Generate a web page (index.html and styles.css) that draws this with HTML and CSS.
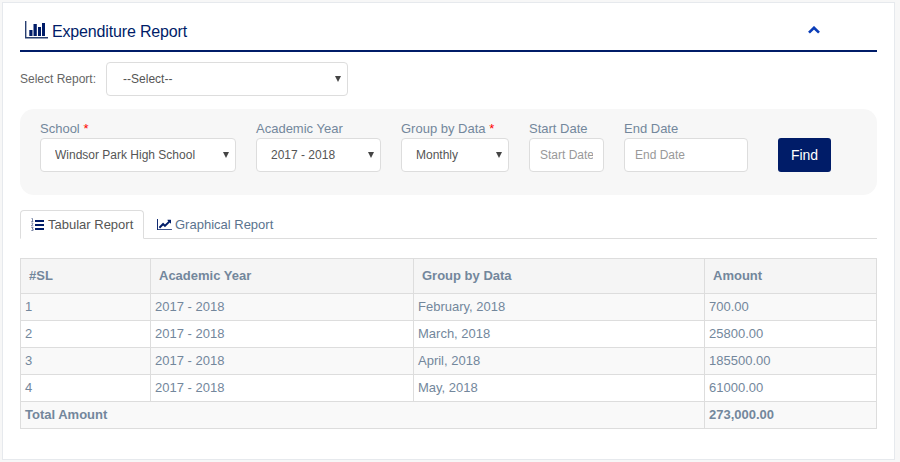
FILE: index.html
```html
<!DOCTYPE html>
<html lang="en">
<head>
<meta charset="utf-8">
<title>Expenditure Report</title>
<link rel="stylesheet" href="styles.css">
</head>
<body>
<main class="panel">
  <header class="panel-head">
    <svg class="title-icon" viewBox="0 0 23 18"><path fill="#283f70" d="M0 0h1.4v16H23v1.6H0z"/><path fill="#001c68" d="M4.3 9h3.2v6H4.3zM8.5 3h3.3v12H8.500zM13 6h3v9h-3zM17 2h3v13h-3z"/></svg>
    <h1>Expenditure Report</h1>
    <svg class="chevron" viewBox="0 0 12 8"><path d="M1 6.600 6 1.800l5 4.800" fill="none" stroke="#0a3db8" stroke-width="2.700"/></svg>
  </header>
  <div class="select-row">
    <label for="report">Select Report:</label>
    <div class="select w-report"><select id="report"><option>--Select--</option></select></div>
  </div>
  <form class="filters">
    <div class="field f-school"><label for="school">School <span class="req">*</span></label><div class="select"><select id="school"><option>Windsor Park High School</option></select></div></div>
    <div class="field f-year"><label for="year">Academic Year</label><div class="select"><select id="year"><option>2017 - 2018</option></select></div></div>
    <div class="field f-group"><label for="group">Group by Data <span class="req">*</span></label><div class="select"><select id="group"><option>Monthly</option></select></div></div>
    <div class="field f-start"><label for="start">Start Date</label><input id="start" placeholder="Start Date"></div>
    <div class="field f-end"><label for="end">End Date</label><input id="end" placeholder="End Date"></div>
    <button class="find" type="button">Find</button>
  </form>
  <nav class="tabs">
    <a class="tab active"><svg class="list-icon" viewBox="0 0 13 13"><path fill="#001c68" d="M4 2h9v2H4zM4 6h9v2H4zM4 10h9v2H4z"/><path d="M.5.500h1v3M.3 3.500h2M.3 5h1.500v1L.4 7.800h1.900M.3 9.500h1.800L1.300 11h.8v1.500H.3" fill="none" stroke="#5d6c92" stroke-width=".8"/></svg><span>Tabular Report</span></a>
    <a class="tab"><svg class="line-icon" viewBox="0 0 2048 1792"><path fill="#001c68" d="M2048 1536v128h-2048v-1536h128v1408h1920zM1920 288v435q0 21-19.5 29.5t-35.5-7.5l-121-121-633 633q-10 10-23 10t-23-10l-233-233-416 416-192-192 585-585q10-10 23-10t23 10l233 233 464-464-121-121q-16-16-7.5-35.5t29.5-19.5h435q14 0 23 9t9 23z"/></svg><span>Graphical Report</span></a>
  </nav>
  <table>
    <colgroup><col class="c-sl"><col class="c-year"><col class="c-group"><col class="c-amount"></colgroup>
    <thead><tr><th>#SL</th><th>Academic Year</th><th>Group by Data</th><th>Amount</th></tr></thead>
    <tbody>
      <tr><td>1</td><td>2017 - 2018</td><td>February, 2018</td><td>700.00</td></tr>
      <tr><td>2</td><td>2017 - 2018</td><td>March, 2018</td><td>25800.00</td></tr>
      <tr><td>3</td><td>2017 - 2018</td><td>April, 2018</td><td>185500.00</td></tr>
      <tr><td>4</td><td>2017 - 2018</td><td>May, 2018</td><td>61000.00</td></tr>
      <tr class="total"><td colspan="3">Total Amount</td><td>273,000.00</td></tr>
    </tbody>
  </table>
</main>
</body>
</html>
```
FILE: styles.css
```css
* { box-sizing: border-box; }
body {
  margin: 0;
  padding: 2px 5px 2px 2px;
  background: #f7f7f7;
  color: #73879c;
  font: 13px/18px "Liberation Sans", Arial, sans-serif;
}
.panel {
  height: 458px;
  padding: 0 17px;
  border: 1px solid #e6e9ed;
  background: #fff;
}
.panel-head {
  display: flex;
  align-items: center;
  height: 49px;
  padding: 6px 57px 0 5px;
  border-bottom: 2px solid #001c68;
}
.title-icon { width: 23px; height: 18px; margin-top: 1px; }
h1 {
  flex: 1;
  margin: 4px 0 0 4px;
  color: #001c68;
  font-size: 16px;
  font-weight: 400;
  line-height: 20px;
  letter-spacing: -.16px;
}
.chevron { width: 12px; height: 8px; }
.select-row {
  display: flex;
  align-items: center;
  height: 34px;
  margin-top: 10px;
  color: #666;
  font-size: 12px;
}
.w-report { width: 242px; margin-left: 10px; }
.select { position: relative; height: 34px; }
.select::after {
  content: "";
  position: absolute;
  top: 14px;
  right: 7px;
  border: 3px solid transparent;
  border-top: 6px solid #444;
  border-bottom: 0;
}
select, input {
  display: block;
  width: 100%;
  height: 34px;
  padding: 0 14px;
  border: 1px solid #ddd;
  border-radius: 4px;
  background: #fff;
  color: #555;
  font: 12px "Liberation Sans", Arial, sans-serif;
  appearance: none;
}
.w-report select { padding-left: 16px; }
input { padding: 0 10px; }
input::placeholder { color: #999; }
.filters {
  display: flex;
  height: 86px;
  margin: 13px 0 15px;
  padding: 11px 20px 0;
  border-radius: 14px;
  background: #f7f7f7;
}
.field label { display: block; height: 18px; white-space: nowrap; }
.f-school { width: 196px; }
.f-year { width: 125px; margin-left: 20px; }
.f-group { width: 108px; margin-left: 20px; }
.f-start { width: 75px; margin-left: 20px; }
.f-end { width: 124px; margin-left: 20px; }
.req { color: red; }
.find {
  width: 53px;
  height: 34px;
  margin: 18px 0 0 30px;
  padding: 0;
  border: 0;
  border-radius: 3px;
  background: #001c68;
  color: #fff;
  font: 14px "Liberation Sans", Arial, sans-serif;
}
.tabs {
  display: flex;
  height: 29px;
  border-bottom: 1px solid #ddd;
}
.tab {
  display: flex;
  align-items: center;
  height: 29px;
  padding: 0 13px;
  color: #5a738e;
}
.active {
  width: 124px;
  padding: 0 0 0 10px;
  border: 1px solid #ddd;
  border-bottom-color: #fff;
  border-radius: 4px 4px 0 0;
  background: #fff;
  color: #555;
}
.list-icon { width: 13px; height: 13px; margin-right: 4px; }
.line-icon { width: 15px; height: 13px; margin-right: 3px; }
table {
  width: 857px;
  margin-top: 19px;
  border-collapse: collapse;
  table-layout: fixed;
}
.c-sl { width: 130px; }
.c-year { width: 263px; }
.c-group { width: 291px; }
.c-amount { width: 172px; }
th, td { height: 27px; padding: 0 4px; border: 1px solid #ddd; text-align: left; }
th { height: 35px; padding: 0 8px; background: #f5f5f5; }
tbody tr:nth-child(odd) { background: #f9f9f9; }
.total { font-weight: 700; }
```
